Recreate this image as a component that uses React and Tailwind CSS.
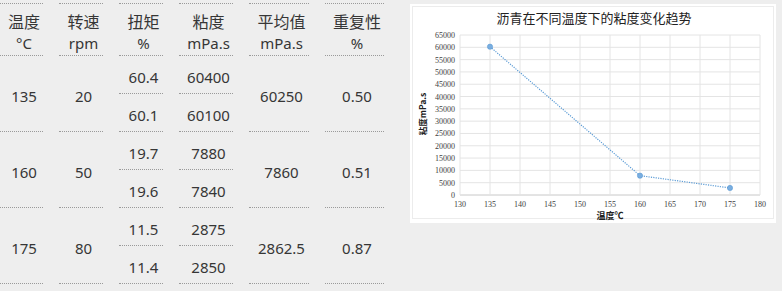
import React from 'react';

const font = { fontFamily: '"Noto Sans", "Noto Sans CJK SC", sans-serif' };

const header = [
  ['温度', '°C'],
  ['转速', 'rpm'],
  ['扭矩', '%'],
  ['粘度', 'mPa.s'],
  ['平均值', 'mPa.s'],
  ['重复性', '%'],
];

const groups = [
  { temp: '135', rpm: '20', torque: ['60.4', '60.1'], visc: ['60400', '60100'], avg: '60250', rep: '0.50' },
  { temp: '160', rpm: '50', torque: ['19.7', '19.6'], visc: ['7880', '7840'], avg: '7860', rep: '0.51' },
  { temp: '175', rpm: '80', torque: ['11.5', '11.4'], visc: ['2875', '2850'], avg: '2862.5', rep: '0.87' },
];

const line = 'border-b border-dotted border-[#9a9a9a]';

const Tall = ({ children }) => (
  <div className={`h-[76px] flex items-center justify-center pl-[5px] pt-[5px] ${line}`}>{children}</div>
);

const Split = ({ values }) => (
  <div className="flex flex-col">
    {values.map((v) => (
      <div key={v} className={`h-[38px] flex items-center justify-center pl-[5px] pt-[5px] ${line}`}>
        {v}
      </div>
    ))}
  </div>
);

const ViscTable = () => (
  <div className="mt-[3px] grid grid-cols-[43px_44px_44px_54px_60px_59px] gap-x-4 text-[15px] text-[#363636]" style={font}>
    {header.map(([zh, unit]) => (
      <div
        key={zh}
        className="h-[53px] flex flex-col items-center justify-center pt-[6px] pl-[5px] border-y border-dotted border-[#9a9a9a] leading-[21px]"
      >
        <span className="text-[16px]">{zh}</span>
        <span>{unit}</span>
      </div>
    ))}
    {groups.map((g) => (
      <React.Fragment key={g.temp}>
        <Tall>{g.temp}</Tall>
        <Tall>{g.rpm}</Tall>
        <Split values={g.torque} />
        <Split values={g.visc} />
        <Tall>{g.avg}</Tall>
        <Tall>{g.rep}</Tall>
      </React.Fragment>
    ))}
  </div>
);

// chart coordinates are relative to the white panel
const px = (t) => 50 + (t - 130) * 6;
const py = (v) => 191 - (v * 160) / 65000;

const ChartPanel = () => {
  const yTicks = Array.from({ length: 14 }, (_, i) => i * 5000);
  const xTicks = Array.from({ length: 11 }, (_, i) => 130 + i * 5);
  const pts = [
    [135, 60250],
    [160, 7860],
    [175, 2862.5],
  ];
  const serif = '"Liberation Serif", "Noto Sans CJK SC", serif';
  const cjk = '"Noto Sans CJK SC", sans-serif';
  return (
    <div className="mt-[4px] ml-[26px] w-[366px] h-[219px] bg-white">
      <svg width="366" height="219" viewBox="0 0 366 219">
        <rect x="2.5" y="2.5" width="361" height="212" fill="none" stroke="#ececec" />
        <text x="184" y="19" textAnchor="middle" fontSize="13" fill="#222" fontFamily={cjk}>
          沥青在不同温度下的粘度变化趋势
        </text>
        {yTicks.map((v) => (
          <g key={v}>
            <line x1="50" x2="350" y1={py(v)} y2={py(v)} stroke={v === 0 ? '#c8c8c8' : '#e4e4e4'} strokeWidth="1" />
            <text x="45" y={py(v) + 3} textAnchor="end" fontSize="8" fill="#404040" fontFamily={serif}>
              {v}
            </text>
          </g>
        ))}
        {xTicks.map((t) => (
          <g key={t}>
            <line x1={px(t)} x2={px(t)} y1="31" y2="191" stroke="#e4e4e4" strokeWidth="1" />
            <text x={px(t)} y="203" textAnchor="middle" fontSize="8" fill="#404040" fontFamily={serif}>
              {t}
            </text>
          </g>
        ))}
        <polyline
          points={pts.map(([t, v]) => `${px(t)},${py(v)}`).join(' ')}
          fill="none"
          stroke="#5b9bd5"
          strokeWidth="1.2"
          strokeDasharray="1.2 1.2"
        />
        {pts.map(([t, v]) => (
          <circle key={t} cx={px(t)} cy={py(v)} r="2.6" fill="#7aaee0" stroke="#5b9bd5" strokeWidth="0.6" />
        ))}
        <text x="200" y="215" textAnchor="middle" fontSize="9" fontWeight="bold" fill="#222" fontFamily={cjk}>
          温度℃
        </text>
        <text
          x="0"
          y="0"
          transform="translate(16 110) rotate(-90)"
          textAnchor="middle"
          fontSize="8.5"
          fontWeight="bold"
          fill="#222"
          fontFamily={cjk}
        >
          粘度mPa.s
        </text>
      </svg>
    </div>
  );
}

export default function App() {
  return (
    <div className="w-[782px] h-[291px] bg-[#eeeeee] flex items-start overflow-hidden">
      <ViscTable />
      <ChartPanel />
    </div>
  );
}
